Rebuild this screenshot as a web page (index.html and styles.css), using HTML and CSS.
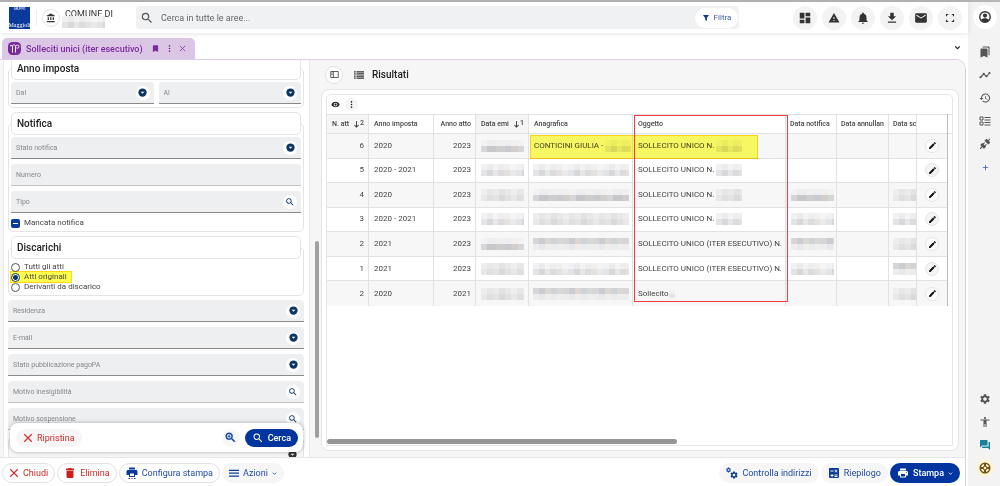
FILE: index.html
```
<!DOCTYPE html>
<html lang="it">
<head>
<meta charset="utf-8">
<meta name="viewport" content="width=device-width, initial-scale=1">
<title>Solleciti unici (iter esecutivo)</title>
<link rel="stylesheet" href="styles.css">
</head>
<body>
<svg class="sprite" aria-hidden="true">
  <symbol id="search" viewBox="0 0 24 24"><path d="M15.5 14h-.79l-.28-.27A6.47 6.47 0 0 0 16 9.5 6.5 6.5 0 1 0 9.5 16c1.61 0 3.09-.59 4.23-1.57l.27.28v.79l5 4.99L20.49 19zm-6 0C7.01 14 5 11.99 5 9.5S7.01 5 9.5 5 14 7.01 14 9.5 11.99 14 9.5 14z"/></symbol>
  <symbol id="zoom-in" viewBox="0 0 24 24"><path d="M15.5 14h-.79l-.28-.27A6.47 6.47 0 0 0 16 9.5 6.5 6.5 0 1 0 9.5 16c1.61 0 3.09-.59 4.23-1.57l.27.28v.79l5 4.99L20.49 19zm-6 0C7.01 14 5 11.99 5 9.5S7.01 5 9.5 5 14 7.01 14 9.5 11.99 14 9.5 14zM9 7h1v2h2v1h-2v2H9v-2H7V9h2z" stroke="currentColor" stroke-width=".6"/></symbol>
  <symbol id="bank" viewBox="0 0 24 24"><path d="M4 10v7h3v-7H4zm6 0v7h3v-7h-3zM2 22h19v-3H2v3zm14-12v7h3v-7h-3zM11.500 1L2 6v2h19V6l-9.500-5z"/></symbol>
  <symbol id="dashboard" viewBox="0 0 24 24"><path d="M3 13h8V3H3zm0 8h8v-6H3zm10 0h8V11h-8zm0-18v6h8V3z"/></symbol>
  <symbol id="warning" viewBox="0 0 24 24"><path d="M1 21h22L12 2 1 21zm12-3h-2v-2h2v2zm0-4h-2v-4h2v4z"/></symbol>
  <symbol id="bell" viewBox="0 0 24 24"><path d="M12 22c1.100 0 2-.9 2-2h-4c0 1.100.89 2 2 2zm6-6v-5c0-3.070-1.640-5.640-4.500-6.320V4c0-.83-.67-1.500-1.500-1.500s-1.500.67-1.500 1.500v.68C7.630 5.360 6 7.920 6 11v5l-2 2v1h16v-1l-2-2z"/></symbol>
  <symbol id="download" viewBox="0 0 24 24"><path d="M19 9h-4V3H9v6H5l7 7 7-7zM5 18v2h14v-2H5z"/></symbol>
  <symbol id="mail" viewBox="0 0 24 24"><path d="M20 4H4c-1.100 0-2 .9-2 2v12c0 1.100.9 2 2 2h16c1.100 0 2-.9 2-2V6c0-1.100-.9-2-2-2zm0 4l-8 5-8-5V6l8 5 8-5v2z"/></symbol>
  <symbol id="fullscreen" viewBox="0 0 24 24"><path d="M7 15H5v4h4v-2H7v-2zM5 9h2V7h2V5H5v4zm12 8h-2v2h4v-4h-2v2zM15 5v2h2v2h2V5h-4z"/></symbol>
  <symbol id="filter" viewBox="0 0 24 24"><path d="M3 3h18l-6.500 9v9l-5-3v-6z"/></symbol>
  <symbol id="account" viewBox="0 0 24 24"><circle cx="12" cy="12" r="9" fill="none" stroke="currentColor" stroke-width="2.400"/><circle cx="12" cy="9.500" r="3.600"/><path d="M5 17c3-4 11-4 14 0-3 5-11 5-14 0z"/></symbol>
  <symbol id="bookmark" viewBox="0 0 24 24"><path d="M17 3H7c-1.100 0-2 .9-2 2v16l7-3 7 3V5c0-1.100-.9-2-2-2z"/></symbol>
  <symbol id="bookmarks" viewBox="0 0 24 24"><path d="M19 18l2 1V3c0-1.100-.9-2-2-2H9C7.890 1 7 1.900 7 3h10c1.100 0 2 .9 2 2v13zM15 5H5c-1.100 0-2 .9-2 2v16l7-3 7 3V7c0-1.100-.9-2-2-2z"/></symbol>
  <symbol id="timeline" viewBox="0 0 24 24"><path d="M3 16.500l6.500-6.500 5.500 5L21 8" fill="none" stroke="currentColor" stroke-width="2.200"/><circle cx="3" cy="16.500" r="2.200"/><circle cx="9.500" cy="9.500" r="2.200"/><circle cx="15" cy="14.500" r="2.200"/><circle cx="21" cy="8" r="2.200"/></symbol>
  <symbol id="history" viewBox="0 0 24 24"><path d="M13 3a9 9 0 0 0-9 9H1l4 4 4-4H6a7 7 0 1 1 2.060 4.940l-1.420 1.420A9 9 0 1 0 13 3zm-1 5v5l4.280 2.540.72-1.210-3.500-2.080V8H12z"/></symbol>
  <symbol id="ballot" viewBox="0 0 24 24"><path d="M2 4h6v6H2zM2 14h6v6H2z" fill="none" stroke="currentColor" stroke-width="2"/><path d="M11 4h12v2H11zm0 5h12v2H11zm0 5h12v2H11zm0 5h12v2H11z"/></symbol>
  <symbol id="plug" viewBox="0 0 24 24"><path d="M21.400 7.500c.8.800.8 2 0 2.800L18.600 13 11 5.500l2.800-2.800c.8-.8 2-.8 2.800 0L18.200 4.300 21.200 1l1.500 1.500L19.600 5.700zM15.600 13.300l-1.400-1.400-2.800 2.800-2.100-2.100 2.800-2.800-1.400-1.400-2.800 2.800-1.500-1.400L3.600 12.600c-.8.8-.8 2 0 2.800l1.600 1.600-4 4 1.700 1.700 4-4 1.600 1.600c.8.8 2 .8 2.800 0l2.800-2.800-1.400-1.400z"/></symbol>
  <symbol id="plus" viewBox="0 0 24 24"><path d="M19 13h-6v6h-2v-6H5v-2h6V5h2v6h6z"/></symbol>
  <symbol id="gear" viewBox="0 0 24 24"><path d="M19.140 12.940c.04-.3.060-.61.060-.94 0-.32-.02-.64-.07-.94l2.030-1.580c.18-.14.23-.41.120-.61l-1.920-3.320c-.12-.22-.37-.29-.59-.22l-2.390.96c-.5-.38-1.030-.7-1.620-.94l-.36-2.540c-.04-.24-.24-.41-.48-.41h-3.840c-.24 0-.43.17-.47.41l-.36 2.540c-.59.24-1.130.57-1.620.94l-2.390-.96c-.22-.08-.47 0-.59.22L2.740 8.870c-.12.21-.08.47.120.61l2.030 1.580c-.05.3-.09.63-.09.94s.02.64.07.94l-2.030 1.580c-.18.14-.23.41-.12.61l1.920 3.320c.12.22.37.29.59.22l2.390-.96c.5.38 1.030.7 1.620.94l.36 2.540c.05.24.24.41.48.41h3.840c.24 0 .44-.17.47-.41l.36-2.540c.59-.24 1.130-.56 1.620-.94l2.390.96c.22.08.47 0 .59-.22l1.920-3.320c.12-.22.07-.47-.12-.61zM12 15.600c-1.980 0-3.600-1.620-3.600-3.600s1.620-3.600 3.600-3.600 3.600 1.620 3.600 3.600-1.620 3.600-3.600 3.600z"/></symbol>
  <symbol id="gears" viewBox="0 0 24 24"><svg x="-1" y="0" width="12" height="12"><use href="#gear"/></svg><svg x="7" y="7" width="18" height="18"><use href="#gear"/></svg></symbol>
  <symbol id="person" viewBox="0 0 24 24"><path d="M12 2c1.100 0 2 .9 2 2s-.9 2-2 2-2-.9-2-2 .9-2 2-2zm9 7h-6v13h-2v-6h-2v6H9V9H3V7h18v2z"/></symbol>
  <symbol id="forum" viewBox="0 0 24 24"><path d="M21 6h-2v9H6v2c0 .55.45 1 1 1h11l4 4V7c0-.55-.45-1-1-1zm-4 6V3c0-.55-.45-1-1-1H3c-.55 0-1 .45-1 1v14l4-4h10c.55 0 1-.45 1-1z"/></symbol>
  <symbol id="lifebuoy" viewBox="0 0 24 24"><path d="M12 4v5M12 15v5M4 12h5M15 12h5" fill="none" stroke="currentColor" stroke-width="4"/><circle cx="12" cy="12" r="4" fill="none" stroke="currentColor" stroke-width="2"/><circle cx="12" cy="12" r="9.500" fill="none" stroke="currentColor" stroke-width="3"/></symbol>
  <symbol id="eye" viewBox="0 0 24 24"><path d="M12 4.500C7 4.500 2.730 7.610 1 12c1.730 4.390 6 7.500 11 7.500s9.270-3.110 11-7.500c-1.730-4.390-6-7.500-11-7.500zM12 17c-2.760 0-5-2.240-5-5s2.240-5 5-5 5 2.240 5 5-2.240 5-5 5zm0-8c-1.660 0-3 1.340-3 3s1.340 3 3 3 3-1.340 3-3-1.340-3-3-3z"/></symbol>
  <symbol id="more" viewBox="0 0 24 24"><circle cx="12" cy="5" r="2.200"/><circle cx="12" cy="12" r="2.200"/><circle cx="12" cy="19" r="2.200"/></symbol>
  <symbol id="edit" viewBox="0 0 24 24"><path d="M3 17.250V21h3.750L17.810 9.940l-3.750-3.750L3 17.250zM20.710 7.040c.39-.39.39-1.020 0-1.410l-2.340-2.340c-.39-.39-1.020-.39-1.410 0l-1.830 1.830 3.750 3.750 1.830-1.830z"/></symbol>
  <symbol id="trash" viewBox="0 0 24 24"><path d="M5 19c0 1.600.9 3 2 3h10c1.100 0 2-1.400 2-3V7H5v12zM20 3h-4.500l-1-1h-5l-1 1H4v3h16V3z"/></symbol>
  <symbol id="print" viewBox="0 0 24 24"><path d="M19 8H5c-1.660 0-3 1.340-3 3v6h4v4h12v-4h4v-6c0-1.660-1.340-3-3-3zm-3 11H8v-5h8v5zm3-7c-.55 0-1-.45-1-1s.45-1 1-1 1 .45 1 1-.45 1-1 1zm-1-9H6v4h12V3z"/></symbol>
  <symbol id="print-setup" viewBox="0 0 24 24"><path d="M20 6H4c-1.660 0-3 1.340-3 3v7h5v4h12v-4h5V9c0-1.660-1.340-3-3-3zm-4 12H8v-5h8v5zM18 1H6v4h12V1zM5 22h3v2H5zm6 0h2v2h-2zm5 0h3v2h-3z"/></symbol>
  <symbol id="calc" viewBox="0 0 24 24"><path fill-rule="evenodd" d="M4 2h16a2 2 0 0 1 2 2v16a2 2 0 0 1-2 2H4a2 2 0 0 1-2-2V4c0-1 1-2 2-2zm1 5v2h6V7zm8 8v2h6v-2zm0 3v2h6v-2zm1-13l-1 1 2 2-2 2 1 1 2-2 2 2 1-1-2-2 2-2-1-1-2 2zM7 14v2H5v2h2v2h2v-2h2v-2H9v-2z"/></symbol>
  <symbol id="close" viewBox="0 0 24 24"><path d="M3 3l18 18M21 3L3 21" fill="none" stroke="currentColor" stroke-width="2.600"/></symbol>
  <symbol id="chevron" viewBox="0 0 24 24"><path d="M4 8l8 8 8-8" fill="none" stroke="currentColor" stroke-width="4"/></symbol>
  <symbol id="drop" viewBox="0 0 24 24"><circle cx="12" cy="12" r="11"/><path d="M7 10h10l-5 5z" fill="#fff"/></symbol>
  <symbol id="menu" viewBox="0 0 24 24"><path d="M0 4h24v3H0zm0 7h24v3H0zm0 7h24v3H0z"/></symbol>
  <symbol id="list" viewBox="0 0 24 24"><path d="M0 3h4v3H0zm6 0h18v3H6zM0 8h4v3H0zm6 0h18v3H6zM0 13h4v3H0zm6 0h18v3H6zM0 18h4v3H0zm6 0h18v3H6z"/></symbol>
  <symbol id="panel" viewBox="0 0 24 24"><path d="M2 4h20v16H2zM9 4v16M4 8h3M4 12h3" fill="none" stroke="currentColor" stroke-width="2"/></symbol>
  <symbol id="down" viewBox="0 0 24 24"><path d="M12 1v20M5 14l7 7 7-7" fill="none" stroke="currentColor" stroke-width="3.500"/></symbol>
</svg>

<div class="app">
  <div class="main">
    <header class="topbar">
      <div class="logo"><small>GRUPPO</small><b>Maggioli</b></div>
      <div class="entity">
        <button class="round entity-btn" aria-label="Ente"><svg class="icon"><use href="#bank"/></svg></button>
        <div class="entity-name">COMUNE DI<span class="mask mask-entity"></span></div>
      </div>
      <div class="search" role="search">
        <svg class="icon icon-lg"><use href="#search"/></svg>
        <input type="search" aria-label="Cerca in tutte le aree" placeholder="Cerca in tutte le aree...">
        <button class="filter"><svg class="icon"><use href="#filter"/></svg>Filtra</button>
      </div>
      <nav class="tools" aria-label="Strumenti">
        <button class="round" aria-label="Cruscotto"><svg class="icon icon-lg"><use href="#dashboard"/></svg></button>
        <button class="round" aria-label="Avvisi"><svg class="icon"><use href="#warning"/></svg></button>
        <button class="round" aria-label="Notifiche"><svg class="icon icon-lg"><use href="#bell"/></svg></button>
        <button class="round" aria-label="Scarica"><svg class="icon icon-lg"><use href="#download"/></svg></button>
        <button class="round" aria-label="Posta"><svg class="icon icon-lg"><use href="#mail"/></svg></button>
        <button class="round" aria-label="Schermo intero"><svg class="icon icon-lg"><use href="#fullscreen"/></svg></button>
      </nav>
    </header>

    <div class="tabs">
      <div class="tab">
        <svg class="tab-logo" viewBox="0 0 26 26" aria-hidden="true"><rect width="26" height="26" rx="9" fill="#7b2a9d"/><path d="M4 8c4-2 5-1 5 2v11M9 7c5-3 6 0 6 3v11M15 9c2-4 7-3 7 0s-3 4-5 3" fill="none" stroke="#fff" stroke-width="2"/></svg>
        <span class="tab-title">Solleciti unici (iter esecutivo)</span>
        <button class="bare" aria-label="Segnalibro"><svg class="icon icon-sm"><use href="#bookmark"/></svg></button>
        <button class="bare" aria-label="Altro"><svg class="icon icon-sm"><use href="#more"/></svg></button>
        <button class="bare" aria-label="Chiudi scheda"><svg class="icon icon-xs"><use href="#close"/></svg></button>
      </div>
      <button class="bare tabs-more" aria-label="Tutte le schede"><svg class="icon icon-xs"><use href="#chevron"/></svg></button>
    </div>

    <main class="workspace">
      <div class="panes">
        <section class="filters">
          <form class="form">
            <fieldset>
              <legend>Anno imposta</legend>
              <div class="pair">
                <div class="field"><select aria-label="Dal"><option>Dal</option></select><span class="knob"><svg class="icon icon-sm"><use href="#drop"/></svg></span></div>
                <div class="field"><select aria-label="Al"><option>Al</option></select><span class="knob"><svg class="icon icon-sm"><use href="#drop"/></svg></span></div>
              </div>
            </fieldset>
            <fieldset>
              <legend>Notifica</legend>
              <div class="field"><select aria-label="Stato notifica"><option>Stato notifica</option></select><span class="knob"><svg class="icon icon-sm"><use href="#drop"/></svg></span></div>
              <div class="field light"><input type="text" aria-label="Numero" placeholder="Numero"></div>
              <div class="field"><input type="text" aria-label="Tipo" placeholder="Tipo"><button type="button" class="knob" aria-label="Cerca tipo"><svg class="icon"><use href="#search"/></svg></button></div>
              <label class="choice"><input type="checkbox" class="mixed">Mancata notifica</label>
            </fieldset>
            <fieldset>
              <legend>Discarichi</legend>
              <div class="radios">
                <label class="choice"><input type="radio" name="discarichi">Tutti gli atti</label>
                <label class="choice marked"><input type="radio" name="discarichi" checked>Atti originali</label>
                <label class="choice"><input type="radio" name="discarichi">Derivanti da discarico</label>
              </div>
            </fieldset>
            <div class="stack">
              <div class="field"><select aria-label="Residenza"><option>Residenza</option></select><span class="knob"><svg class="icon icon-sm"><use href="#drop"/></svg></span></div>
              <div class="field"><select aria-label="E-mail"><option>E-mail</option></select><span class="knob"><svg class="icon icon-sm"><use href="#drop"/></svg></span></div>
              <div class="field"><select aria-label="Stato pubblicazione pagoPA"><option>Stato pubblicazione pagoPA</option></select><span class="knob"><svg class="icon icon-sm"><use href="#drop"/></svg></span></div>
              <div class="field light"><input type="text" aria-label="Motivo inesigibilità" placeholder="Motivo inesigibilità"><button type="button" class="knob" aria-label="Cerca motivo inesigibilità"><svg class="icon"><use href="#search"/></svg></button></div>
              <div class="field light"><input type="text" aria-label="Motivo sospensione" placeholder="Motivo sospensione"><button type="button" class="knob" aria-label="Cerca motivo sospensione"><svg class="icon"><use href="#search"/></svg></button></div>
              <div class="group-end"><svg class="icon icon-sm"><use href="#drop"/></svg></div>
            </div>
          </form>
          <div class="form-actions">
            <button class="pill soft danger"><svg class="icon"><use href="#close"/></svg>Ripristina</button>
            <span class="grow"></span>
            <button class="round small" aria-label="Ricerca avanzata"><svg class="icon icon-lg"><use href="#zoom-in"/></svg></button>
            <button class="pill primary"><svg class="icon icon-lg"><use href="#search"/></svg>Cerca</button>
          </div>
        </section>
        <div class="scroll-y"><span></span></div>

        <section class="results">
          <div class="results-head">
            <button class="round outlined" aria-label="Mostra pannello"><svg class="icon icon-sm"><use href="#panel"/></svg></button>
            <svg class="icon icon-md"><use href="#list"/></svg>
            <h2>Risultati</h2>
          </div>
          <div class="card">
            <div class="grid">
              <div class="grid-tools">
                <button class="bare" aria-label="Colonne visibili"><svg class="icon icon-sm"><use href="#eye"/></svg></button>
                <button class="round tiny" aria-label="Altro"><svg class="icon icon-sm"><use href="#more"/></svg></button>
              </div>
              <div class="grid-body">
                <table>
                  <colgroup><col class="c-num"><col class="c-tax"><col class="c-year"><col class="c-date"><col class="c-name"><col><col class="c-not"><col class="c-ann"><col class="c-sosp"><col class="c-edit"></colgroup>
                  <thead>
                    <tr><th class="sorted"><span class="th-sort">N. att<svg class="icon icon-xs"><use href="#down"/></svg><sup>2</sup></span></th><th>Anno imposta</th><th class="num">Anno atto</th><th class="sorted"><span class="th-sort">Data emi<svg class="icon icon-xs"><use href="#down"/></svg><sup>1</sup></span></th><th>Anagrafica</th><th>Oggetto</th><th class="flush">Data notifica</th><th class="flush">Data annullan</th><th class="flush">Data sc</th><th class="edit" aria-label="Modifica"></th></tr>
                  </thead>
                  <tbody>
                    <tr><td class="num">6</td><td>2020</td><td class="num">2023</td><td><span class="mask m-date dark"></span></td><td>CONTICINI GIULIA - <span class="mask m-tiny"></span></td><td>SOLLECITO UNICO N. <span class="mask m-tiny"></span></td><td></td><td></td><td></td><td class="edit"><button class="round pen" aria-label="Modifica"><svg class="icon"><use href="#edit"/></svg></button></td></tr>
                    <tr><td class="num">5</td><td>2020 - 2021</td><td class="num">2023</td><td><span class="mask m-date"></span></td><td><span class="mask m-name"></span></td><td>SOLLECITO UNICO N. <span class="mask m-tiny"></span></td><td></td><td></td><td></td><td class="edit"><button class="round pen" aria-label="Modifica"><svg class="icon"><use href="#edit"/></svg></button></td></tr>
                    <tr><td class="num">4</td><td>2020</td><td class="num">2023</td><td><span class="mask m-date alt"></span></td><td><span class="mask m-name dark"></span></td><td>SOLLECITO UNICO N. <span class="mask m-tiny alt"></span></td><td><span class="mask m-not dark"></span></td><td></td><td class="flush"><span class="mask m-sosp alt"></span></td><td class="edit"><button class="round pen" aria-label="Modifica"><svg class="icon"><use href="#edit"/></svg></button></td></tr>
                    <tr><td class="num">3</td><td>2020 - 2021</td><td class="num">2023</td><td><span class="mask m-date"></span></td><td><span class="mask m-name alt"></span></td><td>SOLLECITO UNICO N. <span class="mask m-tiny"></span></td><td><span class="mask m-not"></span></td><td></td><td class="flush"><span class="mask m-sosp"></span></td><td class="edit"><button class="round pen" aria-label="Modifica"><svg class="icon"><use href="#edit"/></svg></button></td></tr>
                    <tr><td class="num">2</td><td>2021</td><td class="num">2023</td><td><span class="mask m-date dark"></span></td><td><span class="mask m-name flip"></span></td><td>SOLLECITO UNICO (ITER ESECUTIVO) N.</td><td><span class="mask m-not flip"></span></td><td></td><td class="flush"><span class="mask m-sosp alt"></span></td><td class="edit"><button class="round pen" aria-label="Modifica"><svg class="icon"><use href="#edit"/></svg></button></td></tr>
                    <tr><td class="num">1</td><td>2021</td><td class="num">2023</td><td><span class="mask m-date alt"></span></td><td><span class="mask m-name"></span></td><td>SOLLECITO UNICO (ITER ESECUTIVO) N.</td><td><span class="mask m-not"></span></td><td></td><td class="flush"><span class="mask m-sosp flip"></span></td><td class="edit"><button class="round pen" aria-label="Modifica"><svg class="icon"><use href="#edit"/></svg></button></td></tr>
                    <tr><td class="num">2</td><td>2020</td><td class="num">2021</td><td><span class="mask m-date alt"></span></td><td><span class="mask m-name flip"></span></td><td>Sollecito<span class="mask m-dot"></span></td><td></td><td></td><td class="flush"><span class="mask m-sosp alt"></span></td><td class="edit"><button class="round pen" aria-label="Modifica"><svg class="icon"><use href="#edit"/></svg></button></td></tr>
                  </tbody>
                </table>
                <div class="gutter"></div>
                <span class="note-yellow"></span>
                <span class="note-red"></span>
              </div>
              <div class="scroll-x"><span></span></div>
            </div>
          </div>
        </section>
      </div>

      <footer class="actions">
        <button class="pill line danger"><svg class="icon"><use href="#close"/></svg>Chiudi</button>
        <button class="pill line danger"><svg class="icon icon-lg"><use href="#trash"/></svg>Elimina</button>
        <button class="pill line"><svg class="icon icon-lg"><use href="#print-setup"/></svg>Configura stampa</button>
        <button class="pill soft"><svg class="icon"><use href="#menu"/></svg>Azioni<svg class="icon icon-caret"><use href="#chevron"/></svg></button>
        <span class="grow"></span>
        <button class="pill soft"><svg class="icon icon-lg"><use href="#gears"/></svg>Controlla indirizzi</button>
        <button class="pill soft"><svg class="icon icon-lg"><use href="#calc"/></svg>Riepilogo</button>
        <button class="pill primary"><svg class="icon icon-lg"><use href="#print"/></svg>Stampa<svg class="icon icon-caret"><use href="#chevron"/></svg></button>
      </footer>
    </main>
  </div>

  <aside class="rail">
    <button class="round white" aria-label="Profilo"><svg class="icon icon-lg"><use href="#account"/></svg></button>
    <nav class="rail-group" aria-label="Scorciatoie">
      <button class="bare" aria-label="Segnalibri"><svg class="icon"><use href="#bookmarks"/></svg></button>
      <button class="bare" aria-label="Attività"><svg class="icon"><use href="#timeline"/></svg></button>
      <button class="bare" aria-label="Cronologia"><svg class="icon"><use href="#history"/></svg></button>
      <button class="bare" aria-label="Elenco"><svg class="icon"><use href="#ballot"/></svg></button>
      <button class="bare" aria-label="Connessioni"><svg class="icon"><use href="#plug"/></svg></button>
      <button class="bare add" aria-label="Aggiungi"><svg class="icon icon-sm"><use href="#plus"/></svg></button>
    </nav>
    <span class="grow"></span>
    <nav class="rail-group" aria-label="Supporto">
      <button class="bare" aria-label="Impostazioni"><svg class="icon"><use href="#gear"/></svg></button>
      <button class="bare" aria-label="Accessibilità"><svg class="icon"><use href="#person"/></svg></button>
      <button class="bare chat" aria-label="Messaggi"><svg class="icon"><use href="#forum"/></svg></button>
      <button class="round help" aria-label="Aiuto"><svg class="icon"><use href="#lifebuoy"/></svg></button>
    </nav>
  </aside>
</div>
</body>
</html>
```

FILE: styles.css
```
* { box-sizing: border-box; }
html, body { height: 100%; }
body {
  margin: 0;
  font: 9px/12px Roboto, "Liberation Sans", sans-serif;
  color: #333;
  background: #fff;
  overflow: hidden;
}
button, input, select { font: inherit; color: inherit; border: 0; background: none; padding: 0; margin: 0; }
button { cursor: pointer; }
.sprite { position: absolute; width: 0; height: 0; }
.icon { width: 12px; height: 12px; flex: none; fill: currentColor; display: block; }
.icon-lg { width: 14px; height: 14px; }
.icon-md { width: 10px; height: 10px; }
.icon-sm { width: 9px; height: 9px; }
.icon-xs { width: 7px; height: 7px; }
.grow { flex: 1; }

.app { display: flex; height: 100vh; border-top: 2px solid #b5b5b5; }
.main { flex: 1; min-width: 0; display: flex; flex-direction: column; }

.round {
  display: flex; align-items: center; justify-content: center; flex: none;
  width: 24px; height: 24px; border-radius: 50%; background: #f3f3f3;
}
.bare { display: flex; align-items: center; justify-content: center; flex: none; }

/* Top bar */
.topbar {
  display: flex; align-items: center; flex: none; height: 31px; padding: 0 6px 0 9px;
  background: #fff; box-shadow: 0 1px 6px #0000001a; position: relative;
}
.logo {
  width: 21px; height: 22px; background: #0a3a9c; color: #fff; flex: none; overflow: hidden;
  display: flex; flex-direction: column; align-items: center; justify-content: space-between;
}
.logo small { font-size: 3px; line-height: 5px; }
.logo b { font: 6px/8px "Liberation Serif", serif; }
.entity { display: flex; align-items: center; gap: 5px; width: 100px; margin-left: 6px; padding-left: 5px; border-left: 1px solid #eee; height: 16px; }
.entity-btn { width: 18px; height: 18px; background: #fff; border: 1px solid #e2e2e2; }
.entity-btn .icon { width: 10px; height: 10px; }
.entity-name { position: relative; height: 20px; line-height: 12px; }
.mask-entity { position: absolute; left: -3px; top: 8px; width: 43px; height: 12px; }
.search { flex: 1; display: flex; align-items: center; gap: 7px; height: 23px; margin-right: 54px; padding: 0 1px 0 4px; border-radius: 4px; background: #eff1f2; color: #555; }
.search input { flex: 1; min-width: 0; outline: 0; }
.search input::placeholder { color: #666; opacity: 1; }
.filter { display: flex; align-items: center; justify-content: center; gap: 4px; width: 43px; height: 20px; border-radius: 10px; background: #fff; color: #3a5ba8; font-size: 8px; }
.filter .icon { width: 8px; height: 8px; fill: #0a3a9c; }
.tools { display: flex; gap: 5px; }

/* Tabs */
.tabs { display: flex; align-items: flex-end; justify-content: space-between; flex: none; height: 26px; padding: 0 7px 0 2px; }
.tab { display: flex; align-items: center; gap: 5px; height: 21px; padding: 0 9px 0 6px; border-radius: 5px 5px 0 0; background: #dcc6e6; color: #7b2a9d; }
.tab-logo { width: 13px; height: 13px; }
.tab-title { font-weight: 500; padding-right: 3px; }
.tabs-more { height: 23px; color: #222; }

/* Workspace */
.workspace {
  flex: 1; min-height: 0; display: flex; flex-direction: column; overflow: hidden; margin-right: 2px;
  border: solid #ddcfe6; border-width: 1px 1px 0 0; border-top-right-radius: 10px;
}
.panes { flex: 1; min-height: 0; display: flex; background: #f6f6f6; border-bottom: 1px solid #e6e6e6; }

.filters { position: relative; flex: none; width: 307px; margin-left: 3px; overflow: hidden; background: #fff; border: solid #e8e8e8; border-width: 0 1px; }
.form { display: flex; flex-direction: column; gap: 4px; padding: 0 5px 0 4px; margin-top: -3px; }
fieldset, .stack { display: flex; flex-direction: column; gap: 5px; }
fieldset { min-width: 0; margin: 0; padding: 2px 2px 3px; border: 1px solid #e4e4e4; border-radius: 5px; }
legend {
  width: 100%; height: 23px; padding: 0 5px; border: 1px solid #e4e4e4; border-radius: 5px; background: #fff;
  font-size: 10px; line-height: 21px; font-weight: 500; color: #222;
}
.pair { display: flex; gap: 5px; }
.field { display: flex; align-items: center; height: 22px; padding: 0 4px 0 5px; border-radius: 4px 4px 0 0; border-bottom: 1px solid #8a8a8a; background: #eeeff1; color: #888; font-size: 7px; }
.pair > .field { flex: 1; }
.field.light { border-bottom-color: #c4c4c4; }
.field input, .field select { flex: 1; min-width: 0; height: 100%; appearance: none; outline: 0; }
.field input::placeholder { color: #888; opacity: 1; }
.knob { display: flex; align-items: center; justify-content: center; flex: none; width: 14px; height: 14px; border-radius: 50%; background: #fff; color: #0b3564; }
.knob .icon:not(.icon-sm) { width: 10px; height: 10px; }
.choice { display: flex; align-items: center; gap: 4px; height: 10px; font-size: 8px; line-height: 10px; color: #444; }
.choice input { appearance: none; flex: none; width: 9px; height: 9px; border: 1px solid #555; border-radius: 50%; background: #fff; }
.choice input:checked { border-color: #0b3564; background: radial-gradient(circle, #0b3564 0 2px, #fff 3px); }
.choice .mixed { border: 0; border-radius: 2px; background: linear-gradient(#fff, #fff) center / 5px 1px no-repeat #0a3a9c; }
.radios { display: flex; flex-direction: column; padding-top: 1px; }
.marked { align-self: flex-start; padding-right: 4px; background: #ffff4d; box-shadow: 0 0 0 1px #ffd91a; mix-blend-mode: multiply; }
.group-end { height: 40px; margin-top: 2px; display: flex; justify-content: flex-end; padding: 12px 6px; border: 1px solid #e4e4e4; border-radius: 5px; background: #f7f7f7; }
.form-actions {
  position: absolute; left: 6px; right: 6px; bottom: 5px; display: flex; align-items: center; gap: 5px;
  height: 29px; padding: 0 5px 0 6px; border-radius: 8px; background: #fff; box-shadow: 0 0 4px #0000004d;
}
.small { width: 18px; height: 18px; background: #f7f7f7; color: #0a3a9c; }
.small .icon { width: 13px; height: 13px; }
.scroll-y { width: 10px; padding: 181px 0 0 5px; }
.scroll-y span { display: block; width: 4px; height: 197px; border-radius: 3px; background: #a0a0a0; }

/* Results */
.results { flex: 1; min-width: 0; display: flex; flex-direction: column; padding: 0 6px 6px 1px; }
.results-head { display: flex; align-items: center; gap: 11px; height: 29px; padding-left: 4px; }
.outlined { width: 18px; height: 18px; background: #fff; border: 1px solid #e0e0e0; }
h2 { margin: 0 0 0 -3px; font-size: 10px; line-height: 12px; font-weight: 500; color: #222; }
.card { flex: 1; min-height: 0; display: flex; padding: 4px 5px 4px 4px; border: 1px solid #e6e6e6; border-radius: 8px; background: #fff; }
.grid { flex: 1; min-width: 0; display: flex; flex-direction: column; border: 1px solid #e6e6e6; border-radius: 5px 5px 0 0; }
.grid-tools { display: flex; align-items: center; gap: 5px; height: 19px; padding-left: 4px; color: #222; }
.tiny { width: 13px; height: 13px; background: #f5f5f5; }
.grid-body { position: relative; flex: 1; display: flex; align-items: flex-start; }
table { flex: 1; min-width: 0; width: 0; height: 192px; table-layout: fixed; border-collapse: separate; border-spacing: 0; border-right: 1px solid #bbb; }
.gutter { width: 4px; height: 20px; border: solid #e2e2e2; border-width: 1px 0; }
.c-num { width: 42px; } .c-tax { width: 65px; } .c-year { width: 42px; } .c-date { width: 53px; } .c-name { width: 104px; }
.c-not { width: 51px; } .c-ann { width: 52px; } .c-sosp { width: 28px; } .c-edit { width: 30px; }
th, td { padding: 0 4px 0 5px; border: solid #e2e2e2; border-width: 0 1px 1px 0; text-align: left; overflow: hidden; white-space: nowrap; vertical-align: middle; }
th { height: 20px; border-top-width: 1px; font-size: 7px; line-height: 9px; font-weight: 500; color: #444; }
td { height: 24px; font-size: 8px; line-height: 10px; color: #444; }
tbody tr:nth-child(odd) { background: #f7f7f7; }
tbody tr:last-child td { border-bottom: 0; }
td.num, th.num { text-align: right; }
.sorted { background: #f5f5f5; }
th.flush, td.flush { padding: 0 0 0 4px; }
th.edit, td.edit { padding: 0; border-right: 0; }
.th-sort { display: flex; align-items: center; justify-content: space-between; }
.th-sort .icon { margin-left: auto; }
.th-sort sup { font-size: 7px; line-height: 9px; padding-bottom: 2px; }
.pen { width: 14px; height: 14px; margin: 0 auto; background: #fff; border: 1px solid #e4e4e4; }
tbody tr:nth-child(even) .pen { background: #f5f5f5; }
.pen .icon { width: 9px; height: 9px; fill: #111; }

/* Pixelated private values */
.mask {
  display: inline-block; vertical-align: middle; height: 12px;
  background:
    linear-gradient(#ffffff80 50%, transparent 50%),
    repeating-linear-gradient(90deg, #e3e4e7 0 6px, #d8d8db 6px 12px, #e7e7e7 12px 17px, #dcdcdf 17px 23px, #e4e1df 23px 29px, #eaeaec 29px 35px);
}
.dark { background: linear-gradient(#ffffffb0 50%, transparent 50%), repeating-linear-gradient(90deg, #d6d6d8 0 6px, #c6c7ca 6px 15px, #cdcdcd 15px 24px, #c9cacf 24px 30px, #d2cecc 30px 37px); }
.alt { background: linear-gradient(#ffffff40 50%, transparent 50%), repeating-linear-gradient(90deg, #e8e8e8 0 6px, #dfdfdf 6px 12px, #e4e4e4 12px 18px, #dadadc 18px 24px, #e1e1e1 24px 30px); }
.flip { background: linear-gradient(transparent 50%, #ffffff90 50%), repeating-linear-gradient(90deg, #d6d6d6 0 6px, #cbccd2 6px 12px, #dcd6d5 12px 18px, #d0d3d6 18px 24px, #d8d8d8 24px 30px); }
.m-date { width: 43px; }
.m-name { width: 96px; margin-left: -1px; }
.m-tiny { width: 26px; }
.m-not { width: 43px; }
.m-sosp { width: 24px; }
.m-dot { width: 6px; height: 8px; }

/* Annotations drawn over the grid */
.note-yellow { position: absolute; left: 203px; top: 21px; width: 228px; height: 24px; background: #ffff66; border: 1px solid #ffd91a; mix-blend-mode: multiply; }
.note-red { position: absolute; left: 307px; top: 1px; width: 154px; height: 187px; border: 1px solid #f03a44; }
.scroll-x { height: 6px; }
.scroll-x span { display: block; width: 56%; height: 5px; border-radius: 3px; background: #969696; }

/* Bottom actions */
.actions { display: flex; align-items: center; gap: 2px; flex: none; height: 28px; padding: 2px 5px 0 2px; background: #fff; }
.pill { display: flex; align-items: center; gap: 4px; height: 20px; padding: 0 7px; border-radius: 10px; color: #1f4aa3; }
.pill .icon { width: 10px; height: 10px; fill: #0a3a9c; }
.pill .icon-lg { width: 12px; height: 12px; }
.pill .icon-caret { width: 5px; height: 5px; }
.line { padding: 0 6px; background: #fff; border: 1px solid #e2e2e2; }
.soft { background: #f6f6f6; }
.danger { color: #cf2a27; }
.danger .icon { fill: #c8201d; }
.primary { background: #0035a0; color: #fff; font-weight: 500; }
.primary .icon { fill: #fff; }
.form-actions .pill { height: 18px; }

/* Right rail */
.rail { flex: none; width: 32px; display: flex; flex-direction: column; align-items: center; padding: 3px 0 9px 2px; background: #f3f3f3; color: #555; }
.white { background: #fff; color: #333; }
.rail-group { display: flex; flex-direction: column; align-items: center; gap: 11px; }
.white + .rail-group { margin-top: 17px; }
.add { color: #3a5ba8; height: 12px; }
.chat { color: #16809c; }
.help { width: 18px; height: 18px; margin-top: -3px; background: #fdf3d8; color: #6e5210; }
```
